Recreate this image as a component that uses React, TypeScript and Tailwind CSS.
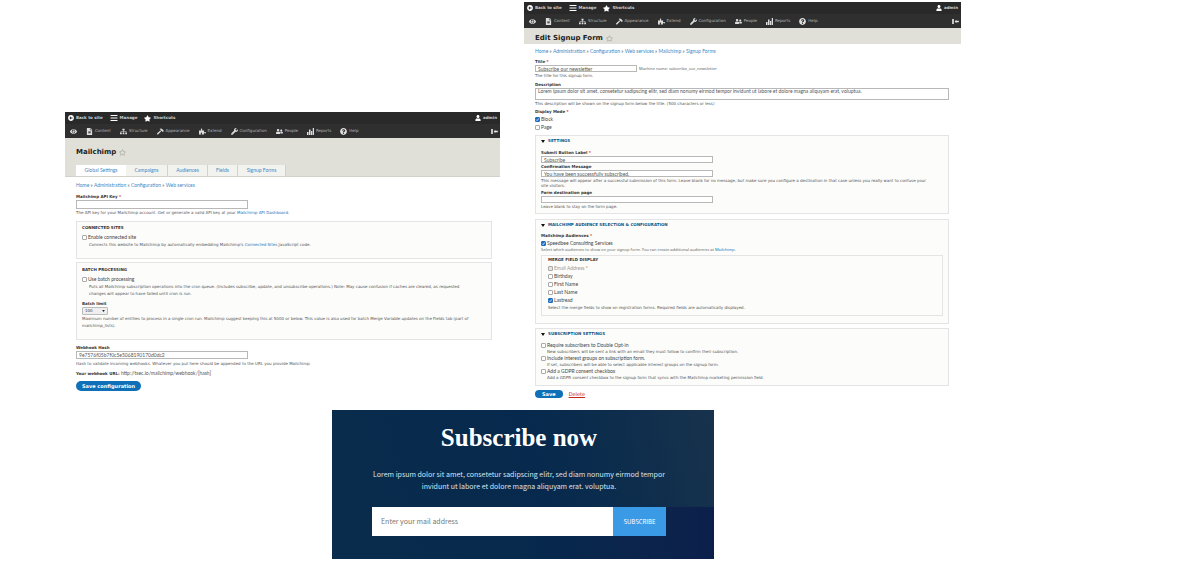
import type { ReactNode } from "react";
import {
  FaArrowAltCircleLeft,
  FaBars,
  FaEye,
  FaFileAlt,
  FaHammer,
  FaPuzzlePiece,
  FaQuestionCircle,
  FaRegStar,
  FaSitemap,
  FaStar,
  FaUser,
  FaUserFriends,
  FaWrench,
} from "react-icons/fa";

function BarsIcon({ className }: { className?: string }) {
  return (
    <svg viewBox="0 0 14 14" fill="currentColor" className={className}>
      <path d="M0 8h3v6H0zM4 3h3v11H4zM8 6h2.500v8H8zM11.500 0H14v14h-2.500z" />
    </svg>
  );
}

const menu = [
  { icon: FaFileAlt, label: "Content" },
  { icon: FaSitemap, label: "Structure" },
  { icon: FaHammer, label: "Appearance" },
  { icon: FaPuzzlePiece, label: "Extend" },
  { icon: FaWrench, label: "Configuration" },
  { icon: FaUserFriends, label: "People" },
  { icon: BarsIcon, label: "Reports" },
  { icon: FaQuestionCircle, label: "Help" },
];

function Toolbar() {
  return (
    <nav className="bg-[#2f2f2f] text-[4px] leading-[12px] text-[#b9b9b9]">
      <div className="flex h-[12px] items-center bg-[#292929] px-[3px] font-bold text-[#d0d0d0]">
        <a href="#site" className="flex items-center gap-[2px]">
          <FaArrowAltCircleLeft className="size-[6px] text-white" />
          Back to site
        </a>
        <a href="#manage" className="ml-[7px] flex items-center gap-[2px]">
          <FaBars className="size-[8px] text-white" />
          Manage
        </a>
        <a href="#shortcuts" className="ml-[7px] flex items-center gap-[2px]">
          <FaStar className="size-[7px] text-white" />
          Shortcuts
        </a>
        <a href="#admin" className="ml-auto flex items-center gap-[2px]">
          <FaUser className="size-[6px] text-white" />
          admin
        </a>
      </div>
      <div className="flex h-[14px] items-center gap-[9px] pr-[2px] pl-[5px]">
        <a href="#tools" aria-label="Tools">
          <FaEye className="size-[7px] text-[#dedede]" />
        </a>
        {menu.map(({ icon: Icon, label }) => (
          <a key={label} href={"#" + label} className="flex items-center gap-[2px]">
            <Icon className="size-[7px] text-[#dedede]" />
            {label}
          </a>
        ))}
        <button type="button" aria-label="Vertical orientation" className="ml-auto">
          <svg viewBox="0 0 8 6" className="h-[5px] w-[7px] fill-[#e4e4e4]">
            <rect x="0" y="0" width="2" height="6" />
            <path d="M3 3l2-2v1.200h3v1.600H5V5z" />
          </svg>
        </button>
      </div>
    </nav>
  );
}

function Crumbs({ items }: { items: string[] }) {
  return (
    <nav className="font-[Lato,sans-serif] text-[5px] leading-[8px] text-[#555]">
      {items.map((item, i) => (
        <span key={item}>
          {i > 0 && " » "}
          <a href={"#" + item} className="text-[#3b8ac9]">
            {item}
          </a>
        </span>
      ))}
    </nav>
  );
}

function Title({ children }: { children: ReactNode }) {
  return (
    <h1 className="flex items-center gap-[3px] text-[7px] leading-[11px] font-bold text-[#222]">
      {children}
      <FaRegStar className="size-[7px] text-[#aaa99f]" />
    </h1>
  );
}

function Label({ id, required, children }: { id: string; required?: boolean; children: ReactNode }) {
  return (
    <label htmlFor={id} className="block text-[4px] leading-[7px] font-bold text-[#333]">
      {children}
      {required && <span className="text-[#d33]"> *</span>}
    </label>
  );
}

function Help({ tight, children }: { tight?: boolean; children: ReactNode }) {
  return (
    <p className={"text-[4px] text-[#555] " + (tight ? "leading-[5px]" : "leading-[7px]")}>{children}</p>
  );
}

const field =
  "block border border-[#b8b8b8] bg-white px-[2px] font-[Lato,sans-serif] text-[5px] leading-[5px] text-[#555]";

function Check({
  id,
  label,
  checked,
  required,
  disabled,
}: {
  id: string;
  label: string;
  checked?: boolean;
  required?: boolean;
  disabled?: boolean;
}) {
  return (
    <div className="flex h-[8px] items-center gap-[1px] font-[Lato,sans-serif] text-[5px] leading-[8px] text-[#444]">
      <span className="relative flex">
        <input
          id={id}
          type="checkbox"
          defaultChecked={checked}
          disabled={disabled}
          className="size-[5px] appearance-none rounded-[1px] border border-[#aaa] bg-white checked:border-[#1b6ec2] checked:bg-[#1b6ec2] disabled:bg-[#e5e5e5]"
        />
        {checked && (
          <svg viewBox="0 0 5 5" className="pointer-events-none absolute inset-0 size-[5px]">
            <path d="M1.100 2.600l1 1 1.800-2.200" fill="none" stroke="#fff" strokeWidth=".8" />
          </svg>
        )}
      </span>
      <label htmlFor={id} className={disabled ? "text-[#999]" : ""}>
        {label}
        {required && <span className="text-[#d33]"> *</span>}
      </label>
    </div>
  );
}

const box = "border border-[#e4e4e4] bg-[#fcfcfa]";

function Summary({ children }: { children: ReactNode }) {
  return (
    <summary className="flex list-none items-center gap-[3px] text-[4px] leading-[8px] font-bold text-[#0b5487] uppercase">
      <svg viewBox="0 0 4 3" className="h-[3px] w-[4px] fill-[#111]">
        <path d="M0 0h4L2 3z" />
      </svg>
      {children}
    </summary>
  );
}

function Legend({ children }: { children: ReactNode }) {
  return <h2 className="text-[4px] leading-[8px] font-bold text-[#333] uppercase">{children}</h2>;
}

const tab = "border-r border-[#d2d2ca] bg-[#f2f2ee]";

function Settings() {
  return (
    <section>
      <Toolbar />
      <header className="border-b border-[#d2d2ca] bg-[#e0e0d8] px-[11px] pt-[9px]">
        <Title>Mailchimp</Title>
        <nav className="mt-[7px] flex h-[11px] text-center font-[Lato,sans-serif] text-[5px] leading-[11px] text-[#3b8ac9]">
          <a href="#global" className="w-[50px] bg-white">
            Global Settings
          </a>
          <a href="#campaigns" className={tab + " w-[42px]"}>
            Campaigns
          </a>
          <a href="#audiences" className={tab + " w-[40px]"}>
            Audiences
          </a>
          <a href="#fields" className={tab + " w-[30px]"}>
            Fields
          </a>
          <a href="#forms" className={tab + " w-[48px]"}>
            Signup Forms
          </a>
        </nav>
      </header>
      <form className="pt-[4px] pr-[8px] pl-[11px]">
        <Crumbs items={["Home", "Administration", "Configuration", "Web services"]} />
        <div className="mt-[4px]">
          <Label id="key" required>
            Mailchimp API Key
          </Label>
          <input id="key" className={field + " h-[9px] w-[172px]"} />
          <Help>
            The API key for your Mailchimp account. Get or generate a valid API key at your{" "}
            <a href="#dashboard" className="text-[#1a73c0]">
              Mailchimp API Dashboard
            </a>
            .
          </Help>
        </div>
        <section className={box + " mt-[5px] h-[38px] px-[5px] pt-[2px]"}>
          <Legend>Connected sites</Legend>
          <div className="mt-[1px]">
            <Check id="connected" label="Enable connected site" />
          </div>
          <div className="pl-[7px]">
            <Help>
              Connects this website to Mailchimp by automatically embedding Mailchimp's{" "}
              <a href="#sites" className="text-[#1a73c0]">
                Connected Sites
              </a>{" "}
              JavaScript code.
            </Help>
          </div>
        </section>
        <section className={box + " mt-[3px] h-[78px] px-[5px] pt-[3px]"}>
          <Legend>Batch processing</Legend>
          <div className="mt-[1px]">
            <Check id="batch" label="Use batch processing" />
          </div>
          <div className="pl-[7px]">
            <Help>
              Puts all Mailchimp subscription operations into the cron queue. (Includes subscribe, update, and
              unsubscribe operations.) Note: May cause confusion if caches are cleared, as requested
              <br />
              changes will appear to have failed until cron is run.
            </Help>
          </div>
          <div className="mt-[3px]">
            <Label id="limit">Batch limit</Label>
            <div className="relative w-[26px]">
              <select
                id="limit"
                className="block h-[8px] w-full appearance-none rounded-[1px] border border-[#bbb] bg-[#efefef] pl-[2px] text-[4px] leading-[6px] text-[#444]"
              >
                <option>100</option>
              </select>
              <svg
                viewBox="0 0 4 3"
                className="pointer-events-none absolute top-[3px] right-[3px] h-[2px] w-[3px] fill-[#222]"
              >
                <path d="M0 0h4L2 3z" />
              </svg>
            </div>
            <Help>
              Maximum number of entities to process in a single cron run. Mailchimp suggest keeping this at 5000 or
              below. This value is also used for batch Merge Variable updates on the Fields tab (part of
              <br />
              mailchimp_lists).
            </Help>
          </div>
        </section>
        <div className="mt-[4px]">
          <Label id="hash">Webhook Hash</Label>
          <input
            id="hash"
            defaultValue="9e7576f05b7f0c5e5068190170d0dc2"
            className={field + " h-[8px] w-[172px]"}
          />
          <div className="mt-[1px]">
            <Help>
              Hash to validate incoming webhooks. Whatever you put here should be appended to the URL you provide
              Mailchimp.
            </Help>
          </div>
        </div>
        <p className="mt-[3px] font-[Lato,sans-serif] text-[5px] leading-[7px] text-[#555]">
          <b className="font-['DejaVu_Sans',sans-serif] text-[4px] text-[#333]">Your webhook URL:</b>{" "}
          http://tsec.io/mailchimp/webhook/[hash]
        </p>
        <button
          type="button"
          className="mt-[4px] block h-[10px] rounded-full bg-[#0f70b7] px-[6px] text-[5px] leading-[10px] font-bold text-white"
        >
          Save configuration
        </button>
      </form>
    </section>
  );
}

const mergeFields = ["Birthday", "First Name", "Last Name"];

function EditForm() {
  return (
    <section>
      <Toolbar />
      <header className="bg-[#e0e0d8] px-[11px] pt-[5px]">
        <Title>Edit Signup Form</Title>
      </header>
      <form className="pt-[3px] pr-[12px] pl-[11px]">
        <Crumbs items={["Home", "Administration", "Configuration", "Web services", "Mailchimp", "Signup Forms"]} />
        <div className="mt-[3px]">
          <Label id="title" required>
            Title
          </Label>
          <div className="flex items-center gap-[2px]">
            <input id="title" defaultValue="Subscribe our newsletter" className={field + " h-[7px] w-[102px]"} />
            <p className="font-['Noto_Sans',sans-serif] text-[4px] leading-[7px] text-[#666]">
              Machine name: subscribe_our_newsletter
            </p>
          </div>
          <Help>The title for this signup form.</Help>
        </div>
        <div className="mt-[2px]">
          <Label id="description">Description</Label>
          <textarea
            id="description"
            className={field + " h-[12px] w-full resize-none"}
            defaultValue="Lorem ipsum dolor sit amet, consetetur sadipscing elitr, sed diam nonumy eirmod tempor invidunt ut labore et dolore magna aliquyam erat, voluptua."
          />
          <Help>This description will be shown on the signup form below the title. (500 characters or less)</Help>
        </div>
        <fieldset className="mt-[1px]">
          <legend className="text-[4px] leading-[7px] font-bold text-[#333]">
            Display Mode <span className="text-[#d33]">*</span>
          </legend>
          <Check id="block" label="Block" checked />
          <Check id="page" label="Page" />
        </fieldset>
        <details open className={box + " mt-[4px] h-[79px] px-[5px] pt-[1px]"}>
          <Summary>Settings</Summary>
          <div className="mt-[4px]">
            <Label id="submit" required>
              Submit Button Label
            </Label>
            <input id="submit" defaultValue="Subscribe" className={field + " h-[7px] w-[172px]"} />
          </div>
          <div>
            <Label id="confirm">Confirmation Message</Label>
            <input
              id="confirm"
              defaultValue="You have been successfully subscribed."
              className={field + " h-[7px] w-[172px]"}
            />
            <div className="mt-[1px]">
              <Help tight>
                This message will appear after a successful submission of this form. Leave blank for no message, but
                make sure you configure a destination in that case unless you really want to confuse your
                <br />
                site visitors.
              </Help>
            </div>
          </div>
          <div className="mt-[1px]">
            <Label id="destination">Form destination page</Label>
            <input id="destination" className={field + " h-[7px] w-[172px]"} />
            <Help>Leave blank to stay on the form page.</Help>
          </div>
        </details>
        <details open className={box + " mt-[5px] h-[105px] px-[5px] pt-[1px]"}>
          <Summary>Mailchimp audience selection &amp; configuration</Summary>
          <fieldset className="mt-[3px]">
            <legend className="text-[4px] leading-[7px] font-bold text-[#333]">
              Mailchimp Audiences <span className="text-[#d33]">*</span>
            </legend>
            <Check id="speedbee" label="Speedbee Consulting Services" checked />
            <p className="font-['Noto_Sans',sans-serif] text-[4px] leading-[5px] text-[#666]">
              Select which audiences to show on your signup form. You can create additional audiences at{" "}
              <a href="#mailchimp" className="text-[#1a73c0]">
                Mailchimp
              </a>
              .
            </p>
          </fieldset>
          <section className={box + " mt-[3px] h-[61px] px-[6px]"}>
            <Legend>Merge field display</Legend>
            <Check id="email" label="Email Address" required disabled />
            {mergeFields.map((name) => (
              <Check key={name} id={name} label={name} />
            ))}
            <Check id="lastread" label="Lastread" checked />
            <Help>
              Select the merge fields to show on registration forms. Required fields are automatically displayed.
            </Help>
          </section>
        </details>
        <details open className={box + " mt-[4px] h-[58px] px-[5px] pt-[1px]"}>
          <Summary>Subscription settings</Summary>
          <div className="mt-[3px]">
            <Check id="optin" label="Require subscribers to Double Opt-in" />
            <div className="pl-[6px]">
              <Help tight>
                New subscribers will be sent a link with an email they must follow to confirm their subscription.
              </Help>
            </div>
            <Check id="groups" label="Include interest groups on subscription form." />
            <div className="pl-[6px]">
              <Help tight>
                If set, subscribers will be able to select applicable interest groups on the signup form.
              </Help>
            </div>
            <Check id="gdpr" label="Add a GDPR consent checkbox" />
            <div className="pl-[6px]">
              <Help tight>
                Add a GDPR consent checkbox to the signup form that syncs with the Mailchimp marketing permission
                field.
              </Help>
            </div>
          </div>
        </details>
        <div className="mt-[4px] flex items-center gap-[6px]">
          <button
            type="button"
            className="h-[8px] rounded-full bg-[#0f70b7] px-[7px] text-[5px] leading-[8px] font-bold text-white"
          >
            Save
          </button>
          <a href="#delete" className="text-[5px] leading-[8px] text-[#c8201c] underline">
            Delete
          </a>
        </div>
      </form>
    </section>
  );
}

function Banner() {
  return (
    <section className="relative w-full max-w-[382px] bg-[#06294c] bg-[linear-gradient(75deg,#0a2c4c_0%,#06294d_55%,#17324c_100%)] pt-[14px] pr-[48px] pb-[23px] pl-[40px] text-center font-['Noto_Sans_CJK_SC',sans-serif] text-white">
      <div className="absolute right-0 bottom-0 h-[52px] w-1/2 bg-linear-to-l from-[#0b1f4b] to-transparent" />
      <div className="relative">
        <h2 className="font-['Liberation_Serif',serif] text-[25px] leading-[28px] font-bold">Subscribe now</h2>
        <p className="mt-[16px] text-[7px] leading-[12px] text-[#dbe5ee]">
          Lorem ipsum dolor sit amet, consetetur sadipscing elitr, sed diam nonumy eirmod tempor
          <br />
          invidunt ut labore et dolore magna aliquyam erat. voluptua.
        </p>
        <form className="mt-[15px] flex h-[29px]">
          <input
            type="email"
            aria-label="Email"
            placeholder="Enter your mail address"
            className="min-w-0 flex-1 bg-white px-[9px] text-[7px] text-[#333] placeholder:text-[#777]"
          />
          <button type="button" className="w-[53px] bg-[#3b9ae6] text-[6px] text-white">
            SUBSCRIBE
          </button>
        </form>
      </div>
    </section>
  );
}

export default function App() {
  return (
    <main className="min-h-screen bg-white pt-[2px] pr-[225px] pb-[26px] pl-[65px] font-['DejaVu_Sans',sans-serif]">
      <div className="grid grid-cols-[435fr_437fr] gap-[24px]">
        <div className="pt-[110px]">
          <Settings />
        </div>
        <EditForm />
      </div>
      <div className="mt-[12px] pl-[267px]">
        <Banner />
      </div>
    </main>
  );
}
